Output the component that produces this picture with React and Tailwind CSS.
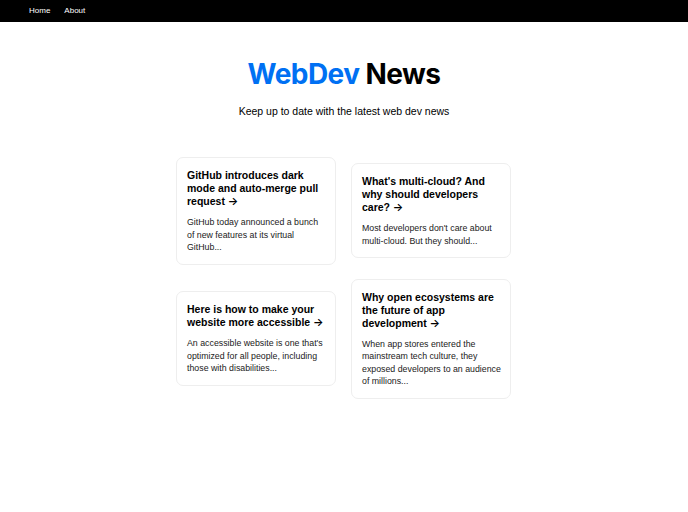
const posts = [
  {
    title: ['GitHub introduces dark', 'mode and auto-merge pull', 'request'],
    excerpt: ['GitHub today announced a bunch', 'of new features at its virtual', 'GitHub...'],
  },
  {
    title: ["What's multi-cloud? And", 'why should developers', 'care?'],
    excerpt: ["Most developers don't care about", 'multi-cloud. But they should...'],
  },
  {
    title: ['Here is how to make your', 'website more accessible'],
    excerpt: ["An accessible website is one that's", 'optimized for all people, including', 'those with disabilities...'],
  },
  {
    title: ['Why open ecosystems are', 'the future of app', 'development'],
    excerpt: ['When app stores entered the', 'mainstream tech culture, they', 'exposed developers to an audience', 'of millions...'],
  },
];

function Title({ lines }) {
  return lines.map((l, i) => (
    <span key={i} className="block whitespace-nowrap">
      {l}
      {i === lines.length - 1 && <span className="font-['Inter',sans-serif] text-[11px] font-semibold"> →</span>}
    </span>
  ));
}

function Lines({ lines }) {
  return lines.map((l, i) => (
    <span key={i} className="block whitespace-nowrap">
      {l}
    </span>
  ));
}

export default function App() {
  return (
    <div className="min-h-[512px] bg-white text-black font-['Liberation_Sans',Arial,sans-serif]">
      {/* Nav */}
      <nav className="h-[22px] bg-black flex items-center pl-[29px] gap-[14px] text-[8px] text-white antialiased">
        <a href="#" className="text-white">Home</a>
        <a href="#" className="text-white">About</a>
      </nav>

      <main className="flex flex-col items-center">
        <h1 className="mt-[35px] text-[28px] leading-[34px] font-bold tracking-[-0.02em] font-['Inter',sans-serif]">
          <span className="text-[#0070f3]">WebDev</span> News
        </h1>
        <p className="mt-[12px] text-[10.5px] leading-[16px]">Keep up to date with the latest web dev news</p>

        {/* Posts */}
        <div className="mt-[38px] ml-[-1px] grid grid-cols-[160px_160px] gap-x-[15px] gap-y-[14px] items-center">
          {posts.map((p) => (
            <a
              key={p.title[0]}
              href="#"
              className="block rounded-[7px] border border-[#eeeeee] px-[10px] pt-[11px] pb-[10px]"
            >
              <h3 className="text-[10.5px] leading-[13px] font-bold mb-[8px]">
                <Title lines={p.title} />
              </h3>
              <p className="text-[8.8px] leading-[12.5px] text-[#1a1a1a]">
                <Lines lines={p.excerpt} />
              </p>
            </a>
          ))}
        </div>
      </main>
    </div>
  );
}
